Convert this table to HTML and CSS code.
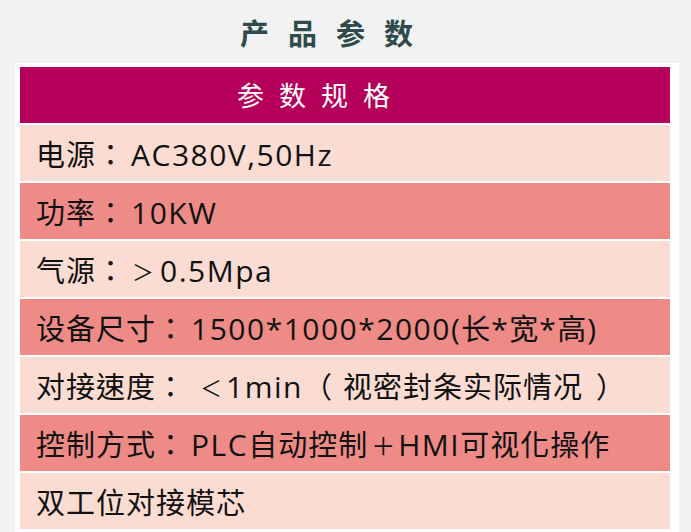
FILE: index.html
```html
<!DOCTYPE html>
<html lang="zh-Hans">
<head>
<meta charset="utf-8">
<title>产品参数</title>
<link rel="stylesheet" href="styles.css">
</head>
<body>
<h1 class="title">产品参数</h1>
<div class="panel">
  <div class="spec" lang="zh-Hant">
    <div class="spec-head" lang="zh-Hans">参数规格</div>
    <div class="spec-row light">电源：<span class="lat after">AC380V,50Hz</span></div>
    <div class="spec-row dark">功率：<span class="lat after">10KW</span></div>
    <div class="spec-row light">气源：<span class="sym">＞</span><span class="lat">0.5Mpa</span></div>
    <div class="spec-row dark">设备尺寸：<span class="lat after">1500*1000*2000(</span>长<span class="lat">*</span>宽<span class="lat">*</span>高<span class="lat">)</span></div>
    <div class="spec-row light">对接速度：<span class="sym lt">＜</span><span class="lat">1min</span><span class="paren open">（</span>视密封条实际情况<span class="paren close">）</span></div>
    <div class="spec-row dark">控制方式：<span class="lat after">PLC</span>自动控制<span class="plus">＋</span><span class="lat">HMI</span>可视化操作</div>
    <div class="spec-row light">双工位对接模芯</div>
  </div>
</div>
</body>
</html>
```
FILE: styles.css
```css
html, body {
  margin: 0;
  padding: 0;
  background: #f2f2f2;
  font-family: "Noto Sans CJK SC", "Noto Sans", sans-serif;
}
.title {
  margin: 0;
  height: 63px;
  box-sizing: border-box;
  padding-left: 240px;
  padding-top: 12px;
  font-size: 29px;
  line-height: 40px;
  font-weight: 700;
  letter-spacing: 19px;
  color: #2e4a4a;
}
.panel {
  margin-left: 15px;
  width: 664px;
  background: #ffffff;
  padding: 4px 9px 10px 5px;
  box-sizing: border-box;
}
.spec {
  display: flex;
  flex-direction: column;
  gap: 2px;
}
.spec-head {
  height: 56px;
  background: #b4005a;
  color: #ffffff;
  font-family: "Noto Sans CJK SC", sans-serif;
  font-size: 27px;
  line-height: 56px;
  letter-spacing: 15px;
  padding-left: 217px;
  box-sizing: border-box;
}
.spec-row {
  height: 56px;
  line-height: 56px;
  font-family: "Noto Sans CJK TC", sans-serif;
  font-size: 29px;
  letter-spacing: 1px;
  color: #111111;
  padding-left: 16px;
  white-space: nowrap;
}
.lat {
  font-family: "Open Sans", "Noto Sans CJK TC", sans-serif;
  font-size: 30px;
  letter-spacing: 1.5px;
}
.after {
  margin-left: 5px;
}
.sym {
  display: inline-block;
  width: 34px;
  text-align: center;
  font-size: 22px;
  line-height: 1;
  letter-spacing: 0;
  vertical-align: 2px;
}
.sym.lt {
  width: 40px;
  text-align: right;
  padding-right: 4px;
  box-sizing: border-box;
}
.paren {
  display: inline-block;
  letter-spacing: 0;
}
.paren.open { width: 40px; text-align: left; }
.paren.close { width: 42px; text-align: right; }
.plus {
  display: inline-block;
  width: 30px;
  text-align: center;
  font-size: 24px;
  line-height: 1;
  letter-spacing: 0;
  vertical-align: 1px;
}
.light { background: #fbdcd3; }
.dark { background: #ef8b86; }
```
